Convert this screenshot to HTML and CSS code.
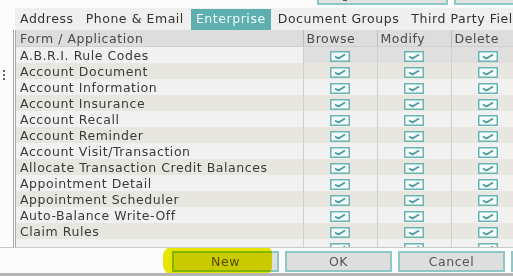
FILE: index.html
```html
<!DOCTYPE html>
<html>
<head>
    <title>Security Rights</title>
    <link rel="stylesheet" href="styles.css">
</head>
<body>
    <div class="topbar">
        <div class="top-btn wide"><span class="top-icon"></span></div>
        <div class="top-btn"></div>
    </div>

    <div class="main">
        <div class="gutter"><div class="grip"></div></div>
        <div class="panel">
            <div class="tabs">
                <div class="tab">Address</div>
                <div class="tab">Phone &amp; Email</div>
                <div class="tab active">Enterprise</div>
                <div class="tab">Document Groups</div>
                <div class="tab">Third Party Fiel</div>
            </div>

            <div class="grid">
                <table class="rights">
                    <colgroup>
                        <col class="c-form"><col class="c-chk"><col class="c-chk"><col class="c-chk">
                    </colgroup>
                    <thead>
                        <tr>
                            <th>Form / Application</th>
                            <th>Browse</th>
                            <th>Modify</th>
                            <th>Delete</th>
                        </tr>
                    </thead>
                    <tbody id="rows"></tbody>
                </table>
            </div>
        </div>
    </div>

    <div class="footer">
        <button class="btn">New</button>
        <button class="btn">OK</button>
        <button class="btn">Cancel</button>
        <button class="btn"></button>
        <div class="marker"></div>
    </div>

    <script>
        // last entry is the row cut off by the bottom of the grid
        const forms = [
            "A.B.R.I. Rule Codes",
            "Account Document",
            "Account Information",
            "Account Insurance",
            "Account Recall",
            "Account Reminder",
            "Account Visit/Transaction",
            "Allocate Transaction Credit Balances",
            "Appointment Detail",
            "Appointment Scheduler",
            "Auto-Balance Write-Off",
            "Claim Rules",
            ""
        ];
        const box = '<svg class="chk" width="20" height="11" viewBox="0 0 20 11">' +
            '<rect x="0.75" y="0.75" width="18.5" height="9.5" fill="#f7fbfb" stroke="#6ab4b4" stroke-width="1.5"/>' +
            '<path d="M5 5.5 L8.5 7.5 L15 3.5" fill="none" stroke="#3f9a9a" stroke-width="1.6"/></svg>';
        const body = document.getElementById("rows");
        forms.forEach((name, i) => {
            const tr = document.createElement("tr");
            if (i == 0) tr.className = "current";
            tr.innerHTML = "<td>" + name + "</td>" +
                "<td class='chk-cell'>" + box + "</td>" +
                "<td class='chk-cell'>" + box + "</td>" +
                "<td class='chk-cell'>" + box + "</td>";
            body.appendChild(tr);
        });
    </script>
</body>
</html>
```

FILE: styles.css
```css
body {
  margin: 0;
  width: 513px;
  height: 276px;
  overflow: hidden;
  background-color: #fcfcfc;
  font-family: "DejaVu Sans", Verdana, sans-serif;
  font-size: 12.5px;
  color: #3a3a3a;
}

/* top toolbar, only the bottom edge of its buttons shows */
.topbar {
  height: 8px;
  display: flex;
  gap: 6px;
  padding-left: 317px;
  overflow: hidden;
}

.top-btn {
  flex: none;
  width: 140px;
  height: 20px;
  margin-top: -15px;
  box-sizing: border-box;
  border: 2px solid #8fc6c6;
  background-color: #e2e2e2;
  position: relative;
}

.top-btn.wide {
  width: 131px;
}

.top-icon {
  position: absolute;
  left: 24px;
  bottom: 2px;
  width: 4px;
  height: 3px;
  background-color: #555;
}

.main {
  display: flex;
  height: 239px;
}

.gutter {
  width: 13px;
  flex: none;
  padding-top: 62px;
}

.grip {
  margin-left: 3px;
  width: 0;
  height: 10px;
  border-left: 2px dotted #666;
}

.panel {
  flex: none;
  width: 512px;
  display: flex;
  flex-direction: column;
}

.tabs {
  height: 22px;
  margin-left: 2px;
  display: flex;
  align-items: stretch;
  gap: 2px;
  background-color: #efefef;
  white-space: nowrap;
  box-sizing: border-box;
  padding-top: 1px;
}

.tab {
  padding: 0 5px;
  line-height: 20px;
  color: #333;
  letter-spacing: 0.55px;
}

.tab.active {
  background-color: #5eb0b0;
  color: #f4fbfb;
}

.grid {
  flex: 1;
  overflow: hidden;
  border-left: 3px double #a9a9a9;
}

.rights {
  border-collapse: collapse;
  table-layout: fixed;
  width: 509px;
}

.c-form {
  width: 287px;
}

.c-chk {
  width: 74px;
}

.rights th,
.rights td {
  height: 16px;
  padding: 2px 0 0 4px;
  box-sizing: border-box;
  line-height: 14px;
  white-space: nowrap;
  overflow: hidden;
  text-align: left;
  font-weight: normal;
  letter-spacing: 0.55px;
  border-left: 1px solid #cfcfcf;
}

.rights th {
  background-color: #dddddd;
  color: #4a4a4a;
  padding-left: 3px;
  border-left: 1px solid #bcbcbc;
  border-bottom: 1px solid #cfcfcf;
}

.rights th:first-child,
.rights td:first-child {
  border-left: 0;
  padding-left: 4px;
}

.rights tbody tr:nth-child(odd) {
  background-color: #f1f1f1;
}

.rights tbody tr:nth-child(even) {
  background-color: #e7e7df;
}

.rights tr.current .chk-cell {
  background-color: #dfdfdf;
}

.rights .chk-cell {
  padding: 3px 0 0;
  text-align: center;
}

.chk {
  display: block;
  margin: 0 auto;
}

.footer {
  position: relative;
  height: 29px;
  box-sizing: border-box;
  border-top: 1px solid #c8c8c8;
  border-bottom: 3px solid #b4b4b4;
  display: flex;
  gap: 6px;
  padding: 3px 0 0 172px;
  overflow: hidden;
}

.btn {
  flex: none;
  width: 107px;
  height: 21px;
  border: 2px solid #8fc6c6;
  background-color: #dedede;
  font-family: "DejaVu Sans", Verdana, sans-serif;
  font-size: 12.5px;
  color: #555;
  letter-spacing: 0.55px;
  padding: 0;
}

/* yellow highlighter stroke over the New button */
.marker {
  position: absolute;
  left: 163px;
  top: -1px;
  width: 109px;
  height: 28px;
  border-radius: 9px 6px 8px 10px;
  background-color: #e8e800;
  mix-blend-mode: multiply;
  pointer-events: none;
}
```
